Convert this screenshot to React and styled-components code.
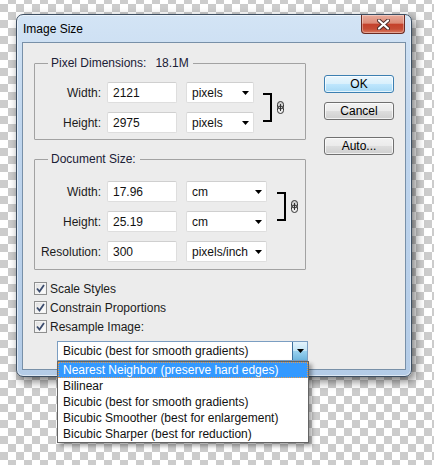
import React from "react";
import styled, { createGlobalStyle } from "styled-components";

const GlobalStyle = createGlobalStyle`
  html, body {
    margin: 0;
    padding: 0;
  }
  body {
    width: 434px;
    height: 465px;
    overflow: hidden;
    background-color: #ffffff;
    background-image: conic-gradient(#cccccc 0 25%, #ffffff 0 50%, #cccccc 0 75%, #ffffff 0);
    background-size: 16px 16px;
    background-position: 0 -4px;
    font-family: "Liberation Sans", Arial, sans-serif;
    font-size: 12px;
    color: #1b1b1b;
  }
`;

const Page = styled.div`
  padding: 14px 0 0 16px;
`;

const Window = styled.div`
  box-sizing: border-box;
  width: 396px;
  border: 1px solid #3d4f63;
  border-radius: 7px;
  padding: 0 5px 6px 5px;
  background: linear-gradient(180deg, #d3e4f5 0%, #c0d6ee 30%, #b9d0ea 70%, #b4cce7 100%);
  box-shadow: inset 0 0 0 1px rgba(255, 255, 255, 0.55), 3px 4px 10px rgba(0, 0, 0, 0.55);
`;

const TitleBar = styled.div`
  display: flex;
  justify-content: space-between;
  align-items: flex-start;
  height: 27px;
`;

const Title = styled.span`
  align-self: center;
  padding-left: 1px;
  color: #000;
  font-size: 12px;
`;

const CloseButton = styled.div`
  width: 44px;
  height: 19px;
  box-sizing: border-box;
  margin-right: 1px;
  display: flex;
  align-items: center;
  justify-content: center;
  border: 1px solid #6b2b22;
  border-top: none;
  border-radius: 0 0 4px 4px;
  background: linear-gradient(180deg, #e8ab9c 0%, #dc8b77 45%, #c4412b 52%, #c64d35 78%, #da7c62 100%);
  box-shadow: inset 0 0 0 1px rgba(255, 255, 255, 0.35);
`;

const Client = styled.div`
  display: flex;
  gap: 18px;
  padding: 13px 11px 8px 11px;
  background: #ececec;
  border: 1px solid #7890a8;
`;

const LeftColumn = styled.div`
  width: 272px;
  display: flex;
  flex-direction: column;
`;

const RightColumn = styled.div`
  width: 70px;
  display: flex;
  flex-direction: column;
  padding-top: 19px;
`;

const Group = styled.fieldset`
  margin: ${(p) => p.$top || 0}px 0 0 0;
  padding: ${(p) => p.$padTop}px 0 ${(p) => p.$padBottom}px 0;
  min-width: 0;
  border: 1px solid #a2a2a2;
  border-radius: 1px;
`;

const Legend = styled.legend`
  margin-left: 13px;
  padding: 0 4px 0 3px;
  line-height: 14px;
  color: #1a2036;
`;

const LegendValue = styled.span`
  margin-left: 9px;
`;

const FieldGrid = styled.div`
  display: grid;
  grid-template-columns: 66px 76px ${(p) => p.$sel + 9}px auto;
  grid-auto-rows: 21px;
  row-gap: 9px;
  align-items: center;
`;

const Label = styled.span`
  text-align: right;
  color: #1b1b1b;
`;

const TextBox = styled.div`
  box-sizing: border-box;
  width: 70px;
  height: 21px;
  margin-left: 6px;
  padding-left: 5px;
  display: flex;
  align-items: center;
  background: #fff;
  border: 1px solid #dedede;
  border-top-color: #cfcfcf;
  border-radius: 2px;
  color: #111;
`;

const UnitSelect = styled.div`
  box-sizing: border-box;
  width: ${(p) => p.$w}px;
  height: 21px;
  margin-left: 9px;
  padding: 0 4px 0 5px;
  display: flex;
  align-items: center;
  justify-content: space-between;
  background: #fff;
  border: 1px solid #dedede;
  border-top-color: #cfcfcf;
  border-radius: 2px;
  color: #111;
`;

const LinkCell = styled.div`
  grid-row: 1 / span 2;
  grid-column: 4;
  align-self: stretch;
  display: flex;
  align-items: center;
  gap: 5px;
  margin: 11px 0 11px ${(p) => p.$gap}px;
`;

const Bracket = styled.div`
  box-sizing: border-box;
  width: 9px;
  height: 100%;
  border: 2px solid #000;
  border-left: none;
`;

const Button = styled.button`
  box-sizing: border-box;
  width: 70px;
  height: 18px;
  margin-top: ${(p) => p.$top || 0}px;
  padding: 0;
  font-family: "Liberation Sans", Arial, sans-serif;
  font-size: 12px;
  color: #000;
  border-radius: 3px;
  border: 1px solid ${(p) => (p.$primary ? "#3c7fb1" : "#707070")};
  background: ${(p) =>
    p.$primary
      ? "linear-gradient(180deg, #eaf6fd 0%, #d9f0fc 48%, #bee6fd 52%, #a7d9f5 100%)"
      : "linear-gradient(180deg, #f2f2f2 0%, #ebebeb 48%, #dddddd 52%, #cfcfcf 100%)"};
  box-shadow: inset 0 0 0 1px rgba(255, 255, 255, 0.7);
`;

const Checks = styled.div`
  margin-top: 9px;
  display: flex;
  flex-direction: column;
`;

const CheckRow = styled.div`
  height: 19px;
  display: flex;
  align-items: center;
  gap: 3px;
  color: #1b1b1b;
`;

const CheckBox = styled.span`
  box-sizing: border-box;
  width: 13px;
  height: 13px;
  display: flex;
  align-items: center;
  justify-content: center;
  border: 1px solid #8e8f8f;
  background: linear-gradient(135deg, #dcdcdc 0%, #f4f4f4 60%, #ffffff 100%);
  box-shadow: inset 0 0 0 1px #f4f4f4;
`;

const Combo = styled.div`
  position: relative;
  box-sizing: border-box;
  width: 251px;
  height: 20px;
  margin: 5px 0 0 23px;
  display: flex;
  background: #fff;
  border: 1px solid #7b9ec2;
`;

const ComboText = styled.div`
  flex: 1;
  display: flex;
  align-items: center;
  padding-left: 5px;
  color: #111;
`;

const ComboArrow = styled.div`
  width: 14px;
  display: flex;
  align-items: center;
  justify-content: center;
  border-left: 1px solid #3d6f9c;
  background: linear-gradient(180deg, #e3f3fc 0%, #c4e5f6 48%, #98d1ef 52%, #6fb6de 100%);
`;

const DropList = styled.div`
  position: absolute;
  top: calc(100% + 1px);
  left: -1px;
  right: -2px;
  background: #fff;
  border: 1px solid #646464;
  box-shadow: 3px 3px 4px rgba(0, 0, 0, 0.35);
  z-index: 2;
`;

const DropItem = styled.div`
  box-sizing: border-box;
  height: 16px;
  padding-left: 4px;
  display: flex;
  align-items: center;
  border: 1px ${(p) => (p.$active ? "dotted #e89a4a" : "solid transparent")};
  background: ${(p) => (p.$active ? "#3399ff" : "#fff")};
  color: ${(p) => (p.$active ? "#fff" : "#111")};
  white-space: nowrap;
`;

const Arrow = () => (
  <svg width="7" height="4" viewBox="0 0 7 4">
    <path d="M0 0 H7 L3.5 4 Z" fill="#000" />
  </svg>
);

const Chain = () => (
  <svg width="7" height="13" viewBox="0 0 7 13">
    <rect x="0.5" y="0.5" width="6" height="7.5" rx="3" fill="#cfcfcf" stroke="#333" />
    <rect x="0.5" y="5" width="6" height="7.5" rx="3" fill="none" stroke="#333" />
    <line x1="3.5" y1="3" x2="3.5" y2="10" stroke="#333" />
  </svg>
);

const Check = () => (
  <svg width="9" height="9" viewBox="0 0 9 9">
    <path d="M1 4.5 L3.5 7.5 L8 1" fill="none" stroke="#3b4c6e" strokeWidth="1.8" />
  </svg>
);

const CloseX = () => (
  <svg width="13" height="11" viewBox="0 0 13 11">
    <path d="M2 1.5 L11 9.5 M11 1.5 L2 9.5" stroke="#4a2b28" strokeWidth="4" strokeLinecap="round" />
    <path d="M2 1.5 L11 9.5 M11 1.5 L2 9.5" stroke="#ffffff" strokeWidth="2.2" strokeLinecap="round" />
  </svg>
);

const FieldRow = ({ label, value, unit, sel }) => (
  <>
    <Label>{label}</Label>
    <TextBox>{value}</TextBox>
    <UnitSelect $w={sel}>
      <span>{unit}</span>
      <Arrow />
    </UnitSelect>
  </>
);

const methods = [
  "Nearest Neighbor (preserve hard edges)",
  "Bilinear",
  "Bicubic (best for smooth gradients)",
  "Bicubic Smoother (best for enlargement)",
  "Bicubic Sharper (best for reduction)",
];

const checks = ["Scale Styles", "Constrain Proportions", "Resample Image:"];

export default function App() {
  return (
    <Page>
      <GlobalStyle />
      <Window>
        <TitleBar>
          <Title>Image Size</Title>
          <CloseButton>
            <CloseX />
          </CloseButton>
        </TitleBar>
        <Client>
          <LeftColumn>
            <Group $padTop={12} $padBottom={6}>
              <Legend>
                Pixel Dimensions:<LegendValue>18.1M</LegendValue>
              </Legend>
              <FieldGrid $sel={68}>
                <FieldRow label="Width:" value="2121" unit="pixels" sel={68} />
                <LinkCell $gap={9}>
                  <Bracket />
                  <Chain />
                </LinkCell>
                <FieldRow label="Height:" value="2975" unit="pixels" sel={68} />
              </FieldGrid>
            </Group>
            <Group $top={12} $padTop={15} $padBottom={7}>
              <Legend>Document Size:</Legend>
              <FieldGrid $sel={81}>
                <FieldRow label="Width:" value="17.96" unit="cm" sel={81} />
                <LinkCell $gap={10}>
                  <Bracket />
                  <Chain />
                </LinkCell>
                <FieldRow label="Height:" value="25.19" unit="cm" sel={81} />
                <FieldRow label="Resolution:" value="300" unit="pixels/inch" sel={81} />
              </FieldGrid>
            </Group>
            <Checks>
              {checks.map((c) => (
                <CheckRow key={c}>
                  <CheckBox>
                    <Check />
                  </CheckBox>
                  {c}
                </CheckRow>
              ))}
            </Checks>
            <Combo>
              <ComboText>Bicubic (best for smooth gradients)</ComboText>
              <ComboArrow>
                <Arrow />
              </ComboArrow>
              <DropList>
                {methods.map((m, i) => (
                  <DropItem key={m} $active={i === 0}>
                    {m}
                  </DropItem>
                ))}
              </DropList>
            </Combo>
          </LeftColumn>
          <RightColumn>
            <Button $primary>OK</Button>
            <Button $top={9}>Cancel</Button>
            <Button $top={17}>Auto...</Button>
          </RightColumn>
        </Client>
      </Window>
    </Page>
  );
}
